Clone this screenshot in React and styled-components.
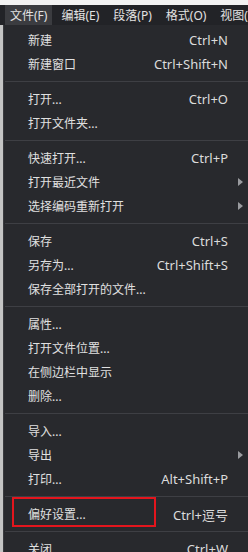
import React from "react";
import styled, { createGlobalStyle } from "styled-components";

const Global = createGlobalStyle`
  html, body { margin: 0; padding: 0; background: #d9d9d9; }
  body { width: 248px; height: 552px; overflow: hidden; }
  #root { width: 248px; height: 552px; }
`;

const Screen = styled.div`
  width: 248px;
  height: 552px;
  display: flex;
  flex-direction: column;
  overflow: hidden;
  font-family: "Noto Sans", "Noto Sans CJK SC", sans-serif;
  color: #dedede;
`;

const TopStrip = styled.div`
  height: 5px;
  background: #f2f2f2;
  flex: none;
`;

const MenuBar = styled.div`
  height: 20px;
  flex: none;
  display: flex;
  align-items: stretch;
  gap: 4px;
  padding-left: 5px;
  background: #222327;
  overflow: hidden;
`;

const BarItem = styled.div`
  display: flex;
  align-items: center;
  padding: 0 5px;
  font-size: 12px;
  white-space: nowrap;
  color: #e2e2e2;
  background: ${(p) => (p.$active ? "#3b3c40" : "transparent")};
`;

const Body = styled.div`
  flex: 1;
  display: flex;
  min-height: 0;
`;

const PageEdge = styled.div`
  width: 3px;
  flex: none;
  background: #c4c4c4;
`;

const Dropdown = styled.div`
  flex: 1;
  background: #28292d;
  border-left: 1px solid #3a3b3f;
  padding-top: 3px;
  display: flex;
  flex-direction: column;
`;

const Row = styled.div`
  position: relative;
  height: 24px;
  flex: none;
  display: flex;
  align-items: center;
  padding: 0 20px 0 24px;
`;

const Label = styled.span`
  flex: 1;
  font-size: 12px;
  white-space: nowrap;
  color: #e0e0e0;
`;

const Shortcut = styled.span`
  font-size: 13px;
  white-space: nowrap;
  color: #dcdcdc;
`;

const Arrow = styled.span`
  position: absolute;
  right: 5px;
  top: 8px;
  width: 0;
  height: 0;
  border-top: 4px solid transparent;
  border-bottom: 4px solid transparent;
  border-left: 5px solid #9a9b9f;
`;

const Separator = styled.div`
  height: 1px;
  flex: none;
  margin: 5px 0 5px 1px;
  background: #3e3f44;
`;

const Highlight = styled.div`
  position: absolute;
  left: 8px;
  top: -5px;
  width: 140px;
  height: 26px;
  border: 2px solid #e3151d;
  pointer-events: none;
`;

const groups = [
  [
    { label: "新建", sc: "Ctrl+N" },
    { label: "新建窗口", sc: "Ctrl+Shift+N" },
  ],
  [
    { label: "打开...", sc: "Ctrl+O" },
    { label: "打开文件夹..." },
  ],
  [
    { label: "快速打开...", sc: "Ctrl+P" },
    { label: "打开最近文件", sub: true },
    { label: "选择编码重新打开", sub: true },
  ],
  [
    { label: "保存", sc: "Ctrl+S" },
    { label: "另存为...", sc: "Ctrl+Shift+S" },
    { label: "保存全部打开的文件..." },
  ],
  [
    { label: "属性..." },
    { label: "打开文件位置..." },
    { label: "在侧边栏中显示" },
    { label: "删除..." },
  ],
  [
    { label: "导入..." },
    { label: "导出", sub: true },
    { label: "打印...", sc: "Alt+Shift+P" },
  ],
  [{ label: "偏好设置...", sc: "Ctrl+逗号", mark: true }],
  [{ label: "关闭", sc: "Ctrl+W" }],
];

export default function App() {
  return (
    <Screen>
      <Global />
      <TopStrip />
      <MenuBar>
        <BarItem $active>文件(F)</BarItem>
        <BarItem>编辑(E)</BarItem>
        <BarItem>段落(P)</BarItem>
        <BarItem>格式(O)</BarItem>
        <BarItem>视图(V)</BarItem>
      </MenuBar>
      <Body>
        <PageEdge />
        <Dropdown>
          {groups.map((g, gi) => (
            <React.Fragment key={gi}>
              {gi > 0 && <Separator />}
              {g.map((it) => (
                <Row key={it.label}>
                  <Label>{it.label}</Label>
                  {it.sc && <Shortcut>{it.sc}</Shortcut>}
                  {it.sub && <Arrow />}
                  {it.mark && <Highlight />}
                </Row>
              ))}
            </React.Fragment>
          ))}
        </Dropdown>
      </Body>
    </Screen>
  );
}
